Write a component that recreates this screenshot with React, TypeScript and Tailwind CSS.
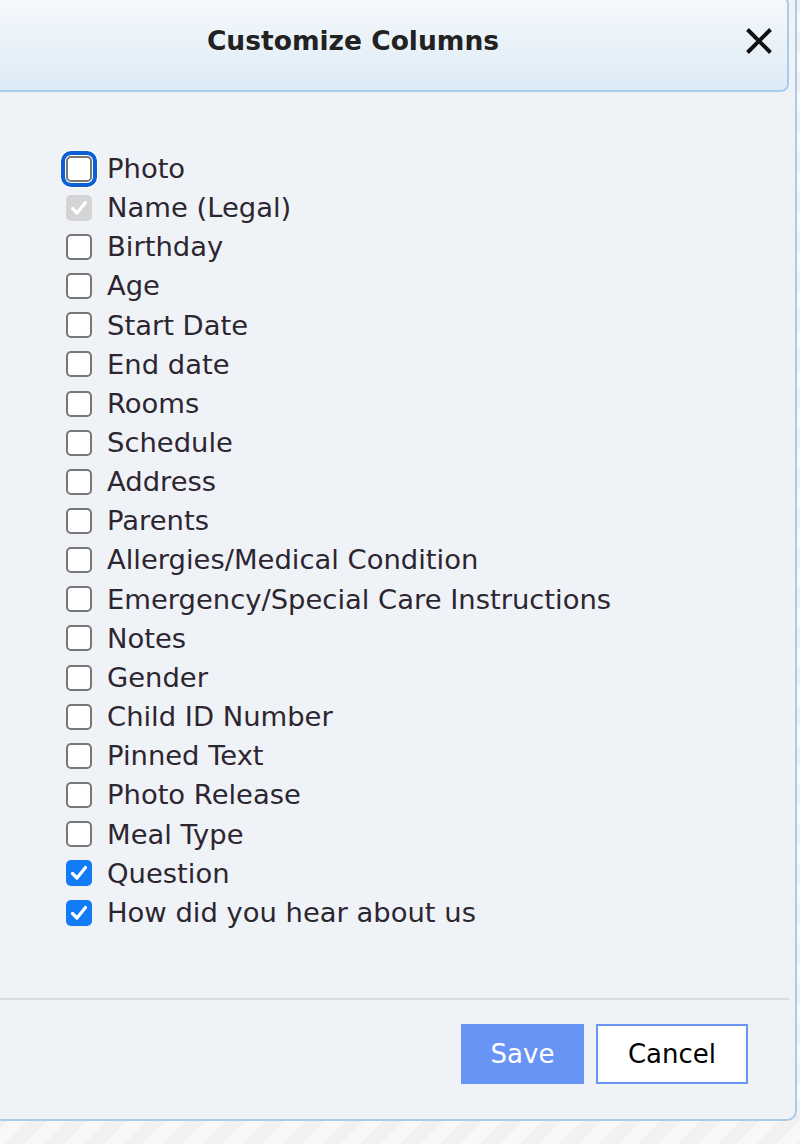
import { useState } from "react";

type Column = { label: string; checked: boolean; disabled?: boolean };

const initialColumns: Column[] = [
  { label: "Photo", checked: false },
  { label: "Name (Legal)", checked: true, disabled: true },
  { label: "Birthday", checked: false },
  { label: "Age", checked: false },
  { label: "Start Date", checked: false },
  { label: "End date", checked: false },
  { label: "Rooms", checked: false },
  { label: "Schedule", checked: false },
  { label: "Address", checked: false },
  { label: "Parents", checked: false },
  { label: "Allergies/Medical Condition", checked: false },
  { label: "Emergency/Special Care Instructions", checked: false },
  { label: "Notes", checked: false },
  { label: "Gender", checked: false },
  { label: "Child ID Number", checked: false },
  { label: "Pinned Text", checked: false },
  { label: "Photo Release", checked: false },
  { label: "Meal Type", checked: false },
  { label: "Question", checked: true },
  { label: "How did you hear about us", checked: true },
];

function Check() {
  return (
    <svg viewBox="0 0 26 26" className="w-[26px] h-[26px]" fill="none">
      <path
        d="M6.5 13.5 L11 18 L19.5 7.5"
        stroke="#fff"
        strokeWidth="3.2"
        strokeLinecap="round"
        strokeLinejoin="round"
      />
    </svg>
  );
}

function Box({ col, focused, onToggle }: { col: Column; focused?: boolean; onToggle: () => void }) {
  let cls = "bg-white border-2 border-[#777]";
  if (col.checked && col.disabled) cls = "bg-[#d4d4d4]";
  else if (col.checked) cls = "bg-[#127cf6]";

  return (
    <button
      type="button"
      onClick={onToggle}
      disabled={col.disabled}
      className={
        "w-[26px] h-[26px] rounded-[5px] flex items-center justify-center shrink-0 " +
        cls +
        (focused ? " shadow-[0_0_0_1px_#ffffff,0_0_0_5px_#0b60d6,0_0_0_6px_#ffffff]" : "")
      }
    >
      {col.checked && <Check />}
    </button>
  );
}

export default function App() {
  const [columns, setColumns] = useState(initialColumns);

  const toggle = (i: number) =>
    setColumns((cs) => cs.map((c, j) => (j === i ? { ...c, checked: !c.checked } : c)));

  return (
    <div
      className="w-[800px] h-[1144px] overflow-hidden bg-[repeating-linear-gradient(135deg,#f1f1f1_0_14px,#f8f8f8_14px_28px)]"
      style={{ fontFamily: '"DejaVu Sans", "Liberation Sans", sans-serif' }}
    >
      <div className="-ml-[91px] -mt-[12px] w-[888px] h-[1133px] border-2 border-[#a9cde9] rounded-[10px] bg-[#eff3f7] p-[6px] flex flex-col">
        {/* title bar */}
        <div className="h-[96px] shrink-0 border-2 border-[#a9cde9] rounded-[8px] bg-[linear-gradient(to_bottom,#f6f9fc,#dcebf6)] grid grid-cols-[1fr_auto_1fr] items-center pb-[6px]">
          <div />
          <h2 className="text-[26.5px] font-bold text-[#222]">Customize Columns</h2>
          <button type="button" className="justify-self-end mr-[14px] w-[28px] h-[28px] flex items-center justify-center">
            <svg viewBox="0 0 28 28" className="w-[28px] h-[28px]">
              <path d="M2.5 2.5 L25.5 25.5 M25.5 2.5 L2.5 25.5" stroke="#111" strokeWidth="4" strokeLinecap="butt" />
            </svg>
          </button>
        </div>

        {/* checkbox list */}
        <div className="mt-[57px] pl-[149px] flex flex-col">
          {columns.map((col, i) => (
            <label key={col.label} className="h-[39.16px] flex items-center gap-[15px] text-[27.4px] text-[#2d2630]">
              <Box col={col} focused={i === 0} onToggle={() => toggle(i)} />
              <span className="leading-none">{col.label}</span>
            </label>
          ))}
        </div>

        <div className="flex-1" />

        {/* footer */}
        <div className="h-[2px] bg-[#dcdcdc] ml-[-6px]" />
        <div className="flex justify-end gap-[12px] pr-[41px] pt-[24px] pb-[29px]">
          <button type="button" className="w-[123px] h-[60px] bg-[#6895f5] text-white text-[26px]">
            Save
          </button>
          <button type="button" className="w-[152px] h-[60px] bg-white border-2 border-[#6a96f2] text-black text-[26px]">
            Cancel
          </button>
        </div>
      </div>
    </div>
  );
}
